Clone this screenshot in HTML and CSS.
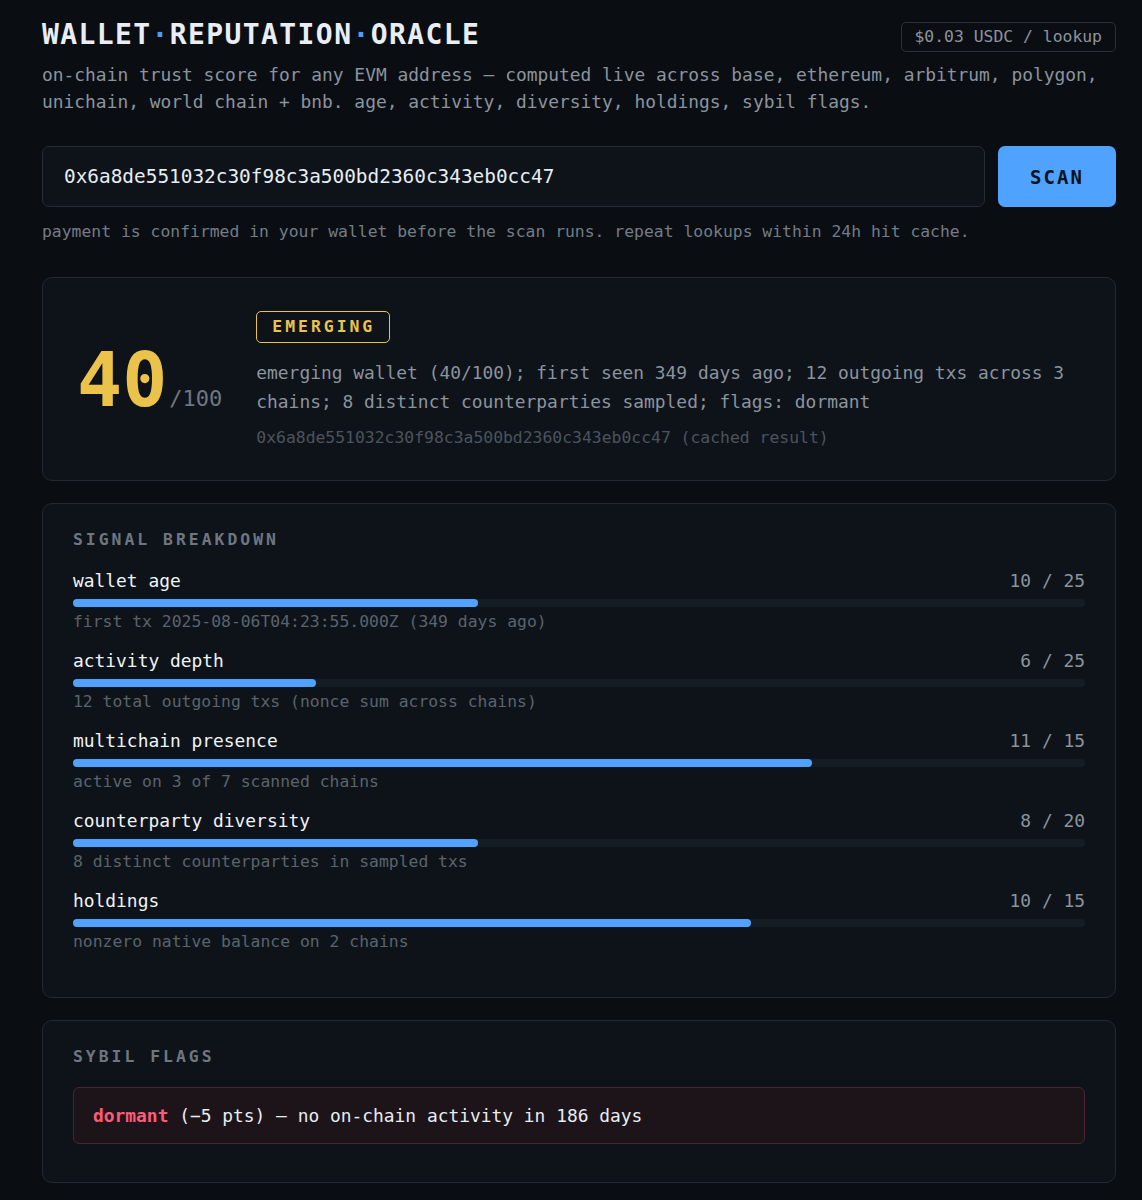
FILE: index.html
```html
<!DOCTYPE html>
<html lang="en">
<head>
    <meta charset="UTF-8">
    <meta name="viewport" content="width=device-width, initial-scale=1.0">
    <title>Wallet Reputation Oracle</title>
    <link rel="stylesheet" href="styles.css">
</head>
<body>
    <div class="wrap">
        <header class="top">
            <h1>WALLET<span class="dot">·</span>REPUTATION<span class="dot">·</span>ORACLE</h1>
            <div class="price">$0.03 USDC / lookup</div>
        </header>
        <p class="lede">on-chain trust score for any EVM address — computed live across base, ethereum, arbitrum, polygon, unichain, world chain + bnb. age, activity, diversity, holdings, sybil flags.</p>

        <form class="scan">
            <input type="text" class="addr" value="0x6a8de551032c30f98c3a500bd2360c343eb0cc47">
            <button type="button" class="scan-btn">SCAN</button>
        </form>
        <p class="note">payment is confirmed in your wallet before the scan runs. repeat lookups within 24h hit cache.</p>

        <section class="card result">
            <div class="score"><span class="big">40</span><span class="out">/100</span></div>
            <div class="summary">
                <span class="tier">EMERGING</span>
                <p class="desc">emerging wallet (40/100); first seen 349 days ago; 12 outgoing txs across 3 chains; 8 distinct counterparties sampled; flags: dormant</p>
                <p class="cached">0x6a8de551032c30f98c3a500bd2360c343eb0cc47 (cached result)</p>
            </div>
        </section>

        <section class="card signals">
            <h2>SIGNAL BREAKDOWN</h2>
            <div class="signal">
                <div class="signal-head"><span>wallet age</span><span class="pts">10 / 25</span></div>
                <div class="track"><div class="fill" style="width: 40%"></div></div>
                <div class="detail">first tx 2025-08-06T04:23:55.000Z (349 days ago)</div>
            </div>
            <div class="signal">
                <div class="signal-head"><span>activity depth</span><span class="pts">6 / 25</span></div>
                <div class="track"><div class="fill" style="width: 24%"></div></div>
                <div class="detail">12 total outgoing txs (nonce sum across chains)</div>
            </div>
            <div class="signal">
                <div class="signal-head"><span>multichain presence</span><span class="pts">11 / 15</span></div>
                <div class="track"><div class="fill" style="width: 73%"></div></div>
                <div class="detail">active on 3 of 7 scanned chains</div>
            </div>
            <div class="signal">
                <div class="signal-head"><span>counterparty diversity</span><span class="pts">8 / 20</span></div>
                <div class="track"><div class="fill" style="width: 40%"></div></div>
                <div class="detail">8 distinct counterparties in sampled txs</div>
            </div>
            <div class="signal">
                <div class="signal-head"><span>holdings</span><span class="pts">10 / 15</span></div>
                <div class="track"><div class="fill" style="width: 67%"></div></div>
                <div class="detail">nonzero native balance on 2 chains</div>
            </div>
        </section>

        <section class="card flags">
            <h2>SYBIL FLAGS</h2>
            <div class="flag"><strong>dormant</strong> (−5 pts) — no on-chain activity in 186 days</div>
        </section>
    </div>
</body>
</html>
```

FILE: styles.css
```css
body {
    margin: 0;
    background-color: #0a0e13;
    color: #e6edf3;
    font-family: 'DejaVu Sans Mono', 'Liberation Mono', monospace;
}
.wrap {
    width: 1074px;
    margin-left: 42px;
    padding-top: 16px;
    padding-bottom: 40px;
}
.top {
    display: flex;
    justify-content: space-between;
    align-items: flex-start;
}
h1 {
    margin: 0;
    font-size: 28px;
    line-height: 38px;
    letter-spacing: 1.4px;
    font-weight: bold;
    color: #e9eef4;
}
.dot {
    color: #4a9eff;
}
.price {
    margin-top: 6px;
    border: 1px solid #2a313a;
    border-radius: 5px;
    padding: 2px 13px;
    font-size: 16.4px;
    line-height: 24px;
    color: #8b949e;
}
.lede {
    margin: 7px 0 0;
    font-size: 17.9px;
    line-height: 27px;
    color: #8b949e;
}
.scan {
    display: flex;
    gap: 13px;
    margin-top: 31px;
}
.addr {
    flex: 1;
    height: 61px;
    box-sizing: border-box;
    background: #0e1319;
    border: 1px solid #252c35;
    border-radius: 7px;
    padding: 0 21px;
    font-family: inherit;
    font-size: 19.4px;
    color: #e6edf3;
}
.scan-btn {
    width: 118px;
    height: 61px;
    background-color: #4fa3ff;
    color: #0a1220;
    border: none;
    border-radius: 7px;
    font-family: inherit;
    font-size: 19px;
    font-weight: bold;
    letter-spacing: 2px;
    cursor: pointer;
}
.note {
    margin: 14px 0 0;
    font-size: 16.4px;
    line-height: 22px;
    color: #737c87;
}
.card {
    background-color: #0e1319;
    border: 1px solid #222932;
    border-radius: 10px;
}
.result {
    margin-top: 34px;
    display: flex;
    align-items: center;
    padding: 33px 34px 31px;
    gap: 34px;
}
.score {
    white-space: nowrap;
}
.big {
    font-size: 75px;
    font-weight: bold;
    line-height: 80px;
    color: #ebc34b;
}
.out {
    margin-left: 2px;
    font-size: 22px;
    color: #6e7781;
}
.tier {
    display: inline-block;
    border: 1.5px solid #ebc34b;
    border-radius: 5px;
    padding: 0 14px 0 15px;
    font-size: 16.4px;
    line-height: 30px;
    font-weight: bold;
    letter-spacing: 3px;
    color: #ebc34b;
}
.desc {
    margin: 15px 0 0;
    font-size: 17.9px;
    line-height: 29px;
    color: #8b949e;
}
.cached {
    margin: 11px 0 0;
    font-size: 16.4px;
    line-height: 22px;
    color: #4b535d;
}
h2 {
    margin: 0;
    font-size: 16.4px;
    line-height: 22px;
    letter-spacing: 3px;
    font-weight: bold;
    color: #6e7781;
}
.signals {
    margin-top: 22px;
    padding: 25px 30px 44px;
}
.signals h2 {
    margin-bottom: 18px;
}
.signal {
    margin-bottom: 16px;
}
.signal:last-child {
    margin-bottom: 0;
}
.signal-head {
    display: flex;
    justify-content: space-between;
    font-size: 17.9px;
    line-height: 24px;
    color: #f0f3f6;
}
.pts {
    color: #8b949e;
}
.track {
    margin-top: 6px;
    height: 8px;
    border-radius: 4px;
    background-color: #161c24;
}
.fill {
    height: 100%;
    border-radius: 4px;
    background-color: #4fa3ff;
}
.detail {
    margin-top: 4px;
    font-size: 16.4px;
    line-height: 22px;
    color: #5a636d;
}
.flags {
    margin-top: 22px;
    padding: 25px 30px 38px;
}
.flags h2 {
    margin-bottom: 19px;
}
.flag {
    background-color: #1d1419;
    border: 1px solid #472532;
    border-radius: 6px;
    padding: 0 19px;
    font-size: 17.9px;
    line-height: 55px;
    color: #e6edf3;
}
.flag strong {
    color: #ff5a78;
}
```
